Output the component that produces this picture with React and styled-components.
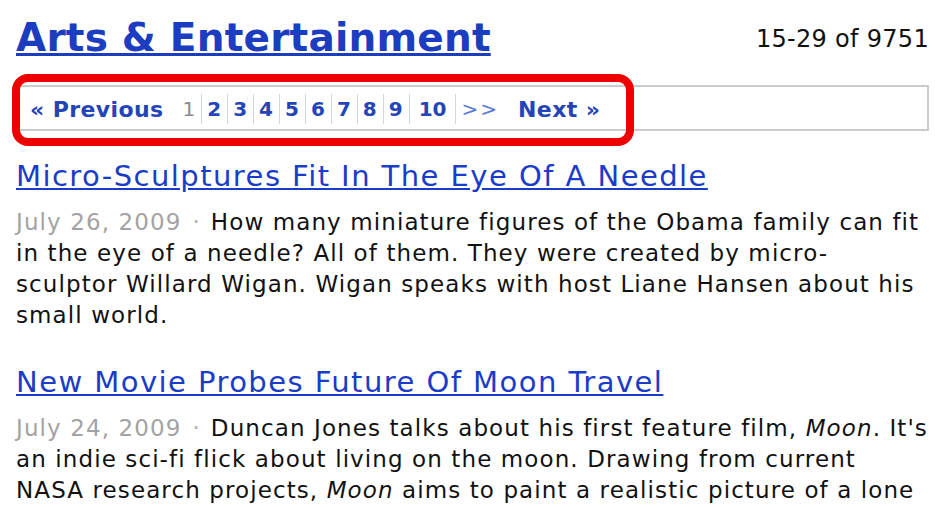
import React from 'react';
import styled, { createGlobalStyle } from 'styled-components';

const GlobalStyle = createGlobalStyle`
  body {
    margin: 0;
    background: #ffffff;
    font-family: 'DejaVu Sans', Verdana, sans-serif;
    color: #111111;
  }
`;

const Page = styled.div`
  width: 948px;
  height: 507px;
  overflow: hidden;
  padding: 15px 19px 0 16px;
  box-sizing: border-box;
`;

const Header = styled.div`
  display: flex;
  justify-content: space-between;
  align-items: flex-start;
`;

const Title = styled.a`
  font-size: 39px;
  line-height: 46px;
  font-weight: bold;
  letter-spacing: 0.2px;
  color: #1c3dbf;
  text-decoration: underline;
`;

const Count = styled.div`
  font-size: 24px;
  line-height: 30px;
  margin-top: 9px;
  letter-spacing: 0.3px;
`;

const PagerWrap = styled.div`
  position: relative;
  margin: 24px 0 0 -2px;
`;

const Pager = styled.div`
  display: flex;
  align-items: center;
  height: 46px;
  border: 2px solid #cccccc;
  box-sizing: border-box;
  padding: 2px 0 0 14px;
  font-size: 20px;
  font-weight: bold;
  color: #2444b8;
`;

const PageLink = styled.span`
  display: flex;
  align-items: center;
  height: 30px;
  padding: 0 ${(p) => (p.$wide ? 9 : 6)}px 0 ${(p) => (p.$wide ? 9 : 5)}px;
  color: ${(p) => (p.$current ? '#8c8c8c' : '#2444b8')};
  font-weight: ${(p) => (p.$current ? 'normal' : 'bold')};
  border-left: ${(p) => (p.$first ? 'none' : '1px solid #cfd8ea')};
`;

const NavLink = styled.span`
  font-size: 22px;
  margin-right: ${(p) => p.$gap || 0}px;
  letter-spacing: 0.4px;
`;

const More = styled.span`
  display: flex;
  align-items: center;
  height: 30px;
  padding: 0 19px 0 5px;
  border-left: 1px solid #cfd8ea;
  font-weight: normal;
  letter-spacing: 2px;
  color: #5a7ad6;
`;

const Highlight = styled.div`
  position: absolute;
  left: -2px;
  top: -11px;
  width: 622px;
  height: 72px;
  border: 8px solid #ee0000;
  border-radius: 16px;
  box-sizing: border-box;
  pointer-events: none;
`;

const Article = styled.div`
  margin-top: ${(p) => p.$top}px;
`;

const Headline = styled.a`
  display: block;
  font-size: 29px;
  line-height: 36px;
  letter-spacing: 1.45px;
  color: #1a3cc8;
  text-decoration: underline;
`;

const Teaser = styled.p`
  margin: 13px 0 0;
  font-size: 23px;
  line-height: 31px;
  white-space: nowrap;
  letter-spacing: 1.1px;
`;

const Date = styled.span`
  color: #a3a3a3;
`;

const Dot = styled.span`
  color: #b0b0b0;
  margin: 0 10px 0 11px;
`;

const pages = [1, 2, 3, 4, 5, 6, 7, 8, 9, 10];

export default function App() {
  return (
    <Page>
      <GlobalStyle />
      <Header>
        <Title>Arts &amp; Entertainment</Title>
        <Count>15-29 of 9751</Count>
      </Header>

      <PagerWrap>
        <Pager>
          <NavLink $gap={14}>« Previous</NavLink>
          {pages.map((n) => (
            <PageLink key={n} $current={n === 1} $first={n === 1} $wide={n === 10}>
              {n}
            </PageLink>
          ))}
          <More>&gt;&gt;</More>
          <NavLink>Next »</NavLink>
        </Pager>
        <Highlight />
      </PagerWrap>

      <Article $top={27}>
        <Headline>Micro-Sculptures Fit In The Eye Of A Needle</Headline>
        <Teaser>
          <Date>July 26, 2009</Date>
          <Dot>·</Dot>
          How many miniature figures of the Obama family can fit
          <br />
          in the eye of a needle? All of them. They were created by micro-
          <br />
          sculptor Willard Wigan. Wigan speaks with host Liane Hansen about his
          <br />
          small world.
        </Teaser>
      </Article>

      <Article $top={33}>
        <Headline>New Movie Probes Future Of Moon Travel</Headline>
        <Teaser>
          <Date>July 24, 2009</Date>
          <Dot>·</Dot>
          Duncan Jones talks about his first feature film, <em>Moon</em>. It's
          <br />
          an indie sci-fi flick about living on the moon. Drawing from current
          <br />
          NASA research projects, <em>Moon</em> aims to paint a realistic picture of a lone
        </Teaser>
      </Article>
    </Page>
  );
}
